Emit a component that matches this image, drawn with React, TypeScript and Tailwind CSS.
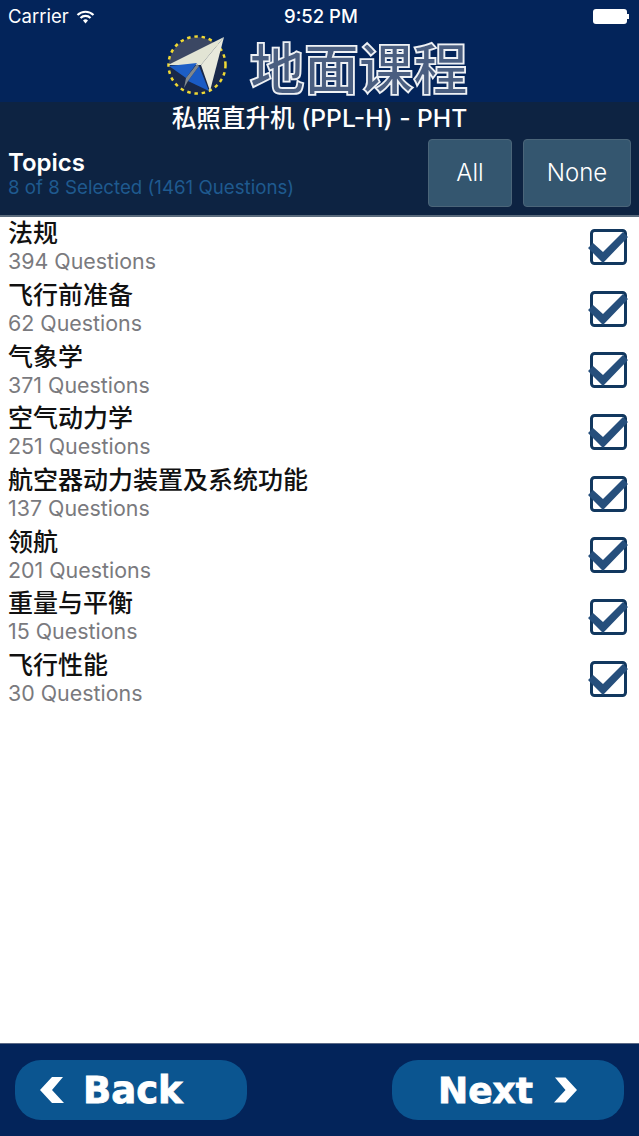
const topics = [
  { name: "法规", count: 394 },
  { name: "飞行前准备", count: 62 },
  { name: "气象学", count: 371 },
  { name: "空气动力学", count: 251 },
  { name: "航空器动力装置及系统功能", count: 137 },
  { name: "领航", count: 201 },
  { name: "重量与平衡", count: 15 },
  { name: "飞行性能", count: 30 },
];

const Logo = () => (
  <svg width="62" height="62" viewBox="0 0 62 62" className="shrink-0">
    <circle cx="31" cy="31" r="28.500" fill="#18284a" />
    <path d="M3 31 A28.500 28.500 0 0 1 52 12 L3 31Z" fill="#3b4763" />
    <circle cx="31" cy="31" r="28.500" fill="none" stroke="#f0d934" strokeWidth="2.500" strokeDasharray="3.500 3.800" />
    <path d="M58 3 L2 31 L35 31 Z" fill="#e2e4d4" />
    <path d="M58 3 L35 31 L44 57 Z" fill="#e8e9dc" />
    <path d="M3 32 L31 29 L20 44 Z" fill="#1c5ec6" />
    <path d="M33 32 L43 57 L22 47 Z" fill="#1a5bc4" />
    <path d="M31 30 L33 32 L22 47 L18 54 L20 44 Z" fill="#7f878d" />
  </svg>
);

const CheckBox = () => (
  <svg width="44" height="40" viewBox="0 0 44 40" className="shrink-0">
    <rect x="5.500" y="4.500" width="34" height="33" rx="3" fill="#fff" stroke="#12385f" strokeWidth="3" />
    <path d="M2 22 L7 17 L17 26 L37 6 L42 11 L17 37 Z" fill="#264f7c" />
  </svg>
);

const BackArrow = () => (
  <svg width="24" height="26" viewBox="0 0 24 26" className="shrink-0">
    <path d="M0 13 L12 0 L23 0 L12 13 L24 26 L12 26 Z" fill="#fff" />
  </svg>
);

const NextArrow = () => (
  <svg width="23" height="26" viewBox="0 0 24 26" className="shrink-0">
    <path d="M24 13 L12 0 L1 0 L12 13 L0 26 L12 26 Z" fill="#fff" />
  </svg>
);

export default function App() {
  return (
    <div className="flex h-[1136px] w-[639px] flex-col overflow-hidden bg-white font-['Inter','Noto_Sans_CJK_SC',sans-serif]">
      <header className="h-[102px] shrink-0 bg-[#03245a] text-white">
        <div className="relative flex h-[32px] items-center justify-between pt-[1px] pr-[10px] pl-2 text-[18.500px] font-normal">
          <div className="flex items-center gap-[7px]">
            <span>Carrier</span>
            <svg width="19" height="14" viewBox="0 0 18 14">
              <path d="M1 5 A11.500 11.500 0 0 1 17 5" fill="none" stroke="#fff" strokeWidth="2.200" />
              <path d="M4 8 A7 7 0 0 1 14 8" fill="none" stroke="#fff" strokeWidth="2.200" />
              <path d="M6.500 10.500 A3.600 3.600 0 0 1 11.500 10.500 L9 13.500Z" fill="#fff" />
            </svg>
          </div>
          <span className="absolute top-[3px] left-[284px] text-[18.500px] font-medium">9:52 PM</span>
          <div className="flex items-center">
            <div className="h-[15px] w-[34px] rounded-[3px] bg-white" />
            <div className="h-[5px] w-[2px] bg-white" />
          </div>
        </div>
        <div className="flex items-center justify-center gap-[21px] pr-[5px]">
          <Logo />
          <span className="font-['Noto_Sans_CJK_SC',sans-serif] text-[55px] leading-[66px] font-bold tracking-[-0.5px] text-[#4a5e80] [-webkit-text-stroke:1.800px_#eef1f5]">
            地面课程
          </span>
        </div>
      </header>

      <section className="h-[115px] shrink-0 border-b-2 border-[#5a6b7d] bg-[#0d2342] text-white">
        <div className="pt-[2px] text-center text-[24.600px] leading-[28px] font-medium">私照直升机 (PPL-H) - PHT</div>
        <div className="flex items-start justify-between pt-[7px] pr-2 pl-2">
          <div className="pt-[10px]">
            <div className="text-[24px] leading-[28px] font-semibold">Topics</div>
            <div className="text-[18.700px] leading-[22px] text-[#1f5a8f]">8 of 8 Selected (1461 Questions)</div>
          </div>
          <div className="flex gap-[11px]">
            <button className="h-[68px] w-[84px] rounded-[4px] border border-[#4b6579] bg-[#34566f] text-[24px] font-light">All</button>
            <button className="h-[68px] w-[108px] rounded-[4px] border border-[#4b6579] bg-[#34566f] text-[24px] font-light">None</button>
          </div>
        </div>
      </section>

      <main className="flex-1">
        {topics.map((topic) => (
          <div key={topic.name} className="flex h-[61.700px] items-center justify-between pr-[9px] pl-2">
            <div className="pb-[5px]">
              <div className="font-['Noto_Sans_CJK_SC',sans-serif] text-[25px] leading-[30px] font-medium text-[#111]">{topic.name}</div>
              <div className="mt-[2px] text-[21.400px] leading-[26px] text-[#7a7a7e]">{topic.count} Questions</div>
            </div>
            <div className="pb-[4px]">
              <CheckBox />
            </div>
          </div>
        ))}
      </main>

      <footer className="flex h-[93px] shrink-0 items-center justify-between border-t border-[#5b6a86] bg-[#03245a] px-[15px] pb-[1px] font-['DejaVu_Sans',sans-serif] text-white">
        <button className="flex h-[60px] w-[232px] items-center gap-[19px] rounded-[26px] bg-[#0b5590] pl-[25px] text-[37px] font-bold [-webkit-text-stroke:0.800px_white]">
          <BackArrow />
          <span className="pt-[3px]">Back</span>
        </button>
        <button className="flex h-[60px] w-[232px] items-center justify-end gap-[21px] rounded-[26px] bg-[#0b5590] pr-[47px] text-[36px] font-bold [-webkit-text-stroke:0.800px_white]">
          <span className="pt-[3px]">Next</span>
          <NextArrow />
        </button>
      </footer>
    </div>
  );
}
